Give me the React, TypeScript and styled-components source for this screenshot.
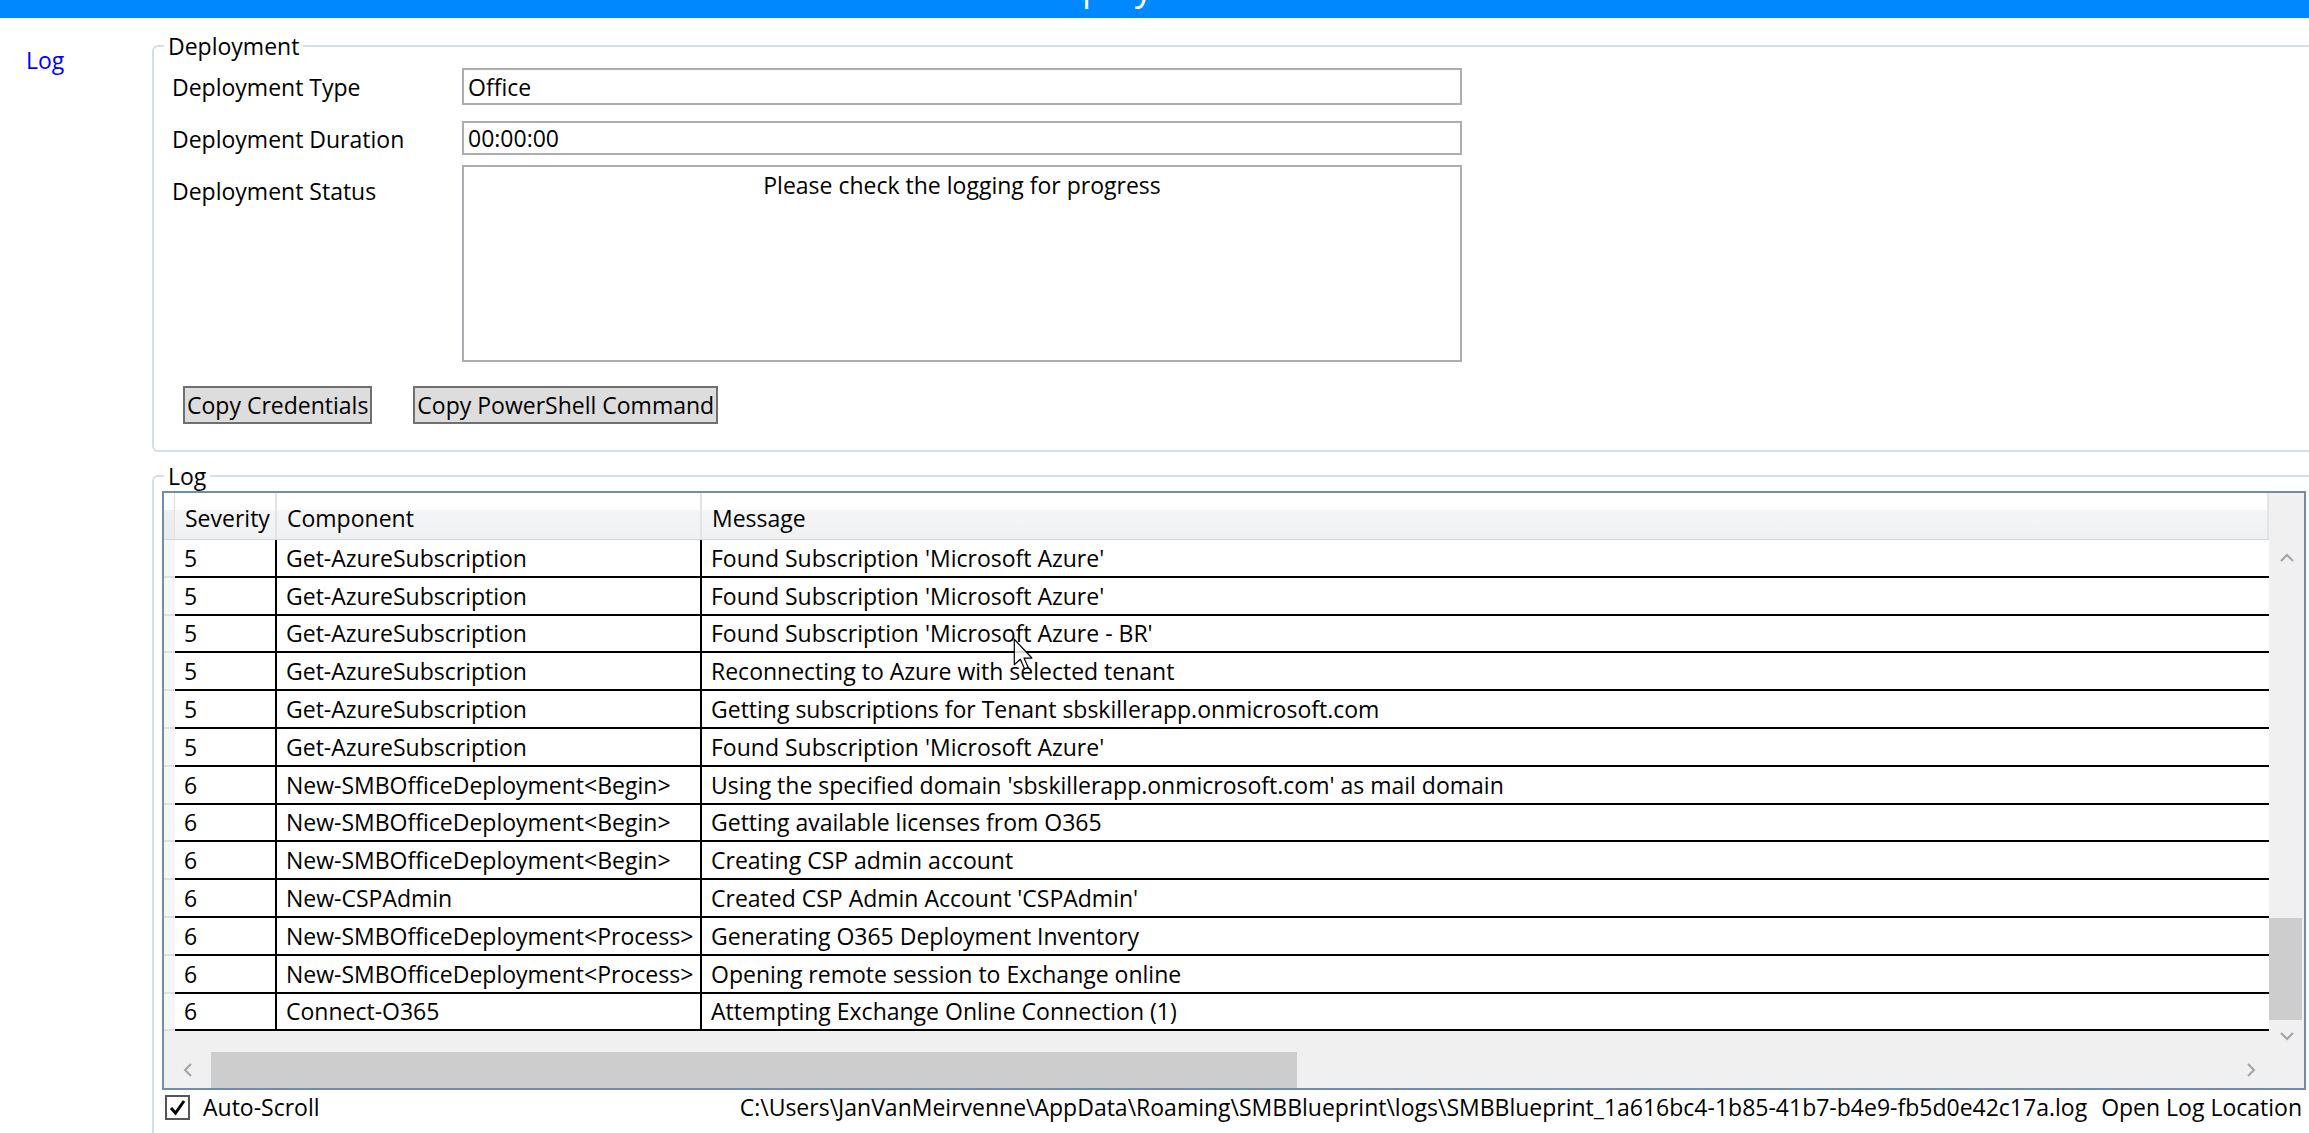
import React from "react";
import styled, { createGlobalStyle } from "styled-components";

const GlobalStyle = createGlobalStyle`
  html, body { margin: 0; padding: 0; background: #fff; overflow: hidden; }
  body { font-family: "Open Sans", "Noto Sans", sans-serif; font-size: 23px; color: #000; }
  * { box-sizing: border-box; }
`;

const Window = styled.div`
  position: relative;
  width: 2309px;
  height: 1133px;
  overflow: hidden;
  display: flex;
  flex-direction: column;
`;

const TitleBar = styled.header`
  flex: 0 0 18px;
  height: 18px;
  background: #0088ff;
  overflow: hidden;
  display: flex;
  justify-content: center;
  align-items: flex-start;
`;

const TitleText = styled.span`
  color: #fff;
  font-size: 36px;
  line-height: 36px;
  margin-top: -31px;
  padding-right: 32px;
  white-space: nowrap;
`;

const Body = styled.div`
  display: flex;
  flex: 1;
  min-height: 0;
`;

const Nav = styled.nav`
  flex: 0 0 152px;
  width: 152px;
  padding: 26px 0 0 26px;
`;

const NavLink = styled.a`
  color: #0000ff;
  font-size: 23px;
  line-height: 30px;
  text-decoration: none;
`;

const Main = styled.main`
  flex: 0 0 2164px;
  width: 2164px;
  display: flex;
  flex-direction: column;
`;

const Group = styled.fieldset<{ $top: number }>`
  margin: ${(p) => p.$top}px 0 0 0;
  padding: 0;
  min-width: 0;
  border: 2px solid #d5dfe6;
  border-radius: 6px;
`;

const Legend = styled.legend`
  margin-left: 10px;
  padding: 0 4px;
  line-height: 30px;
`;

const DeployBody = styled.div`
  padding: 7px 0 26px 18px;
  display: flex;
  flex-direction: column;
`;

const FieldRow = styled.div<{ $mt: number }>`
  display: flex;
  align-items: flex-start;
  margin-top: ${(p) => p.$mt}px;
`;

const Label = styled.label<{ $offset: number }>`
  flex: 0 0 290px;
  width: 290px;
  line-height: 30px;
  padding-top: ${(p) => p.$offset}px;
`;

const TextBox = styled.div<{ $h: number }>`
  width: 1000px;
  height: ${(p) => p.$h}px;
  border: 2px solid #abadb3;
  padding: 0 4px;
  display: flex;
  align-items: center;
  line-height: 30px;
`;

const StatusBox = styled.div`
  width: 1000px;
  height: 197px;
  border: 2px solid #abadb3;
  padding: 3px 4px 0;
  text-align: center;
  line-height: 30px;
`;

const ButtonRow = styled.div`
  display: flex;
  gap: 41px;
  margin: 24px 0 0 11px;
`;

const Button = styled.button`
  height: 38px;
  padding: 0 2px;
  border: 2px solid #707070;
  background: #dddddd;
  font: inherit;
  line-height: 30px;
  color: #000;
`;

const LogBody = styled.div`
  padding: 0 8px 60px 8px;
  display: flex;
  flex-direction: column;
`;

const GridFrame = styled.div`
  border: 2px solid #6e8eae;
  background: #f0f0f0;
  display: grid;
  grid-template-columns: 1fr 35px;
  grid-template-rows: 47px 512px 36px;
`;

const Header = styled.div`
  display: flex;
  background: linear-gradient(#ffffff 0, #ffffff 38%, #f4f5f6 38%, #f0f1f3 100%);
  border-bottom: 1px solid #d5d5d5;
`;

const HeaderGutter = styled.div`
  flex: 0 0 11px;
  border-right: 1px solid #e2e2e2;
  background: linear-gradient(#ffffff 0, #ffffff 38%, #eeeeee 38%, #eaeaea 100%);
`;

const HeaderCell = styled.div<{ $w?: number }>`
  flex: ${(p) => (p.$w ? `0 0 ${p.$w}px` : "1")};
  display: flex;
  align-items: flex-end;
  padding: 0 0 6px 10px;
  border-right: 2px solid #e4e4e4;
  line-height: 30px;
  white-space: nowrap;
`;

const RowsArea = styled.div`
  display: flex;
  flex-direction: column;
  overflow: hidden;
  background: #f0f0f0;
`;

const Row = styled.div`
  display: flex;
  flex: 0 0 37.8px;
  height: 37.8px;
`;

const RowGutter = styled.div`
  flex: 0 0 11px;
  background: #f6f6f6;
  border-bottom: 2px solid #e0e0e0;
`;

const Cell = styled.div<{ $w?: number }>`
  flex: ${(p) => (p.$w ? `0 0 ${p.$w}px` : "1")};
  display: flex;
  align-items: center;
  padding-left: 9px;
  background: #fff;
  border-bottom: 2px solid #000;
  border-right: ${(p) => (p.$w ? "2px solid #000" : "none")};
  white-space: nowrap;
  overflow: hidden;
  line-height: 30px;
`;

const VScroll = styled.div`
  display: flex;
  flex-direction: column;
  background: #f0f0f0;
`;

const ArrowButton = styled.div<{ $size: number }>`
  flex: 0 0 ${(p) => p.$size}px;
  display: flex;
  align-items: center;
  justify-content: center;
`;

const VTrack = styled.div`
  flex: 1;
  display: flex;
  flex-direction: column;
  justify-content: flex-end;
`;

const VThumb = styled.div`
  height: 102px;
  margin: 0 2px 0 0;
  background: #cdcdcd;
`;

const HScroll = styled.div`
  display: flex;
  background: #f0f0f0;
`;

const HTrack = styled.div`
  flex: 1;
  display: flex;
`;

const HThumb = styled.div`
  width: 1086px;
  background: #cdcdcd;
`;

const Corner = styled.div`
  background: #f0f0f0;
`;

const Footer = styled.div`
  display: flex;
  align-items: center;
  height: 28px;
  margin-top: 3px;
  padding: 0 4px 0 3px;
  line-height: 28px;
  white-space: nowrap;
`;

const CheckBox = styled.span`
  width: 25px;
  height: 25px;
  border: 2px solid #555;
  background: #fff;
  display: flex;
  align-items: center;
  justify-content: center;
`;

const CheckLabel = styled.span`
  margin-left: 13px;
`;

const Spacer = styled.span`
  flex: 1;
`;

const PathText = styled.span`
  margin-right: 14px;
`;

const Cursor = styled.svg`
  position: absolute;
  left: 1013px;
  top: 638px;
  pointer-events: none;
`;

const Chevron = ({ dir }: { dir: "up" | "down" | "left" | "right" }) => {
  const paths: Record<string, string> = {
    up: "M1 8 L7 2 L13 8",
    down: "M1 2 L7 8 L13 2",
    left: "M8 1 L2 7 L8 13",
    right: "M2 1 L8 7 L2 13",
  };
  const vertical = dir === "up" || dir === "down";
  return (
    <svg width={vertical ? 14 : 10} height={vertical ? 10 : 14} viewBox={vertical ? "0 0 14 10" : "0 0 10 14"}>
      <path d={paths[dir]} fill="none" stroke="#a3a3a3" strokeWidth="2" />
    </svg>
  );
};

const rows: [string, string, string][] = [
  ["5", "Get-AzureSubscription", "Found Subscription 'Microsoft Azure'"],
  ["5", "Get-AzureSubscription", "Found Subscription 'Microsoft Azure'"],
  ["5", "Get-AzureSubscription", "Found Subscription 'Microsoft Azure - BR'"],
  ["5", "Get-AzureSubscription", "Reconnecting to Azure with selected tenant"],
  ["5", "Get-AzureSubscription", "Getting subscriptions for Tenant sbskillerapp.onmicrosoft.com"],
  ["5", "Get-AzureSubscription", "Found Subscription 'Microsoft Azure'"],
  ["6", "New-SMBOfficeDeployment<Begin>", "Using the specified domain 'sbskillerapp.onmicrosoft.com' as mail domain"],
  ["6", "New-SMBOfficeDeployment<Begin>", "Getting available licenses from O365"],
  ["6", "New-SMBOfficeDeployment<Begin>", "Creating CSP admin account"],
  ["6", "New-CSPAdmin", "Created CSP Admin Account 'CSPAdmin'"],
  ["6", "New-SMBOfficeDeployment<Process>", "Generating O365 Deployment Inventory"],
  ["6", "New-SMBOfficeDeployment<Process>", "Opening remote session to Exchange online"],
  ["6", "Connect-O365", "Attempting Exchange Online Connection (1)"],
];

const logPath = String.raw`C:\Users\JanVanMeirvenne\AppData\Roaming\SMBBlueprint\logs\SMBBlueprint_1a616bc4-1b85-41b7-b4e9-fb5d0e42c17a.log`;

export default function App() {
  return (
    <>
      <GlobalStyle />
      <Window>
        <TitleBar>
          <TitleText>Deployment</TitleText>
        </TitleBar>
        <Body>
          <Nav>
            <NavLink href="#">Log</NavLink>
          </Nav>
          <Main>
            <Group $top={13}>
              <Legend>Deployment</Legend>
              <DeployBody>
                <FieldRow $mt={0}>
                  <Label $offset={4}>Deployment Type</Label>
                  <TextBox $h={37}>Office</TextBox>
                </FieldRow>
                <FieldRow $mt={16}>
                  <Label $offset={3}>Deployment Duration</Label>
                  <TextBox $h={34}>00:00:00</TextBox>
                </FieldRow>
                <FieldRow $mt={10}>
                  <Label $offset={11}>Deployment Status</Label>
                  <StatusBox>Please check the logging for progress</StatusBox>
                </FieldRow>
                <ButtonRow>
                  <Button>Copy Credentials</Button>
                  <Button>Copy PowerShell Command</Button>
                </ButtonRow>
              </DeployBody>
            </Group>
            <Group $top={9}>
              <Legend>Log</Legend>
              <LogBody>
                <GridFrame>
                  <Header>
                    <HeaderGutter />
                    <HeaderCell $w={102}>Severity</HeaderCell>
                    <HeaderCell $w={425}>Component</HeaderCell>
                    <HeaderCell>Message</HeaderCell>
                  </Header>
                  <Corner />
                  <RowsArea>
                    {rows.map(([sev, comp, msg], i) => (
                      <Row key={i}>
                        <RowGutter />
                        <Cell $w={102}>{sev}</Cell>
                        <Cell $w={425}>{comp}</Cell>
                        <Cell>{msg}</Cell>
                      </Row>
                    ))}
                  </RowsArea>
                  <VScroll>
                    <ArrowButton $size={36}>
                      <Chevron dir="up" />
                    </ArrowButton>
                    <VTrack>
                      <VThumb />
                    </VTrack>
                    <ArrowButton $size={32}>
                      <Chevron dir="down" />
                    </ArrowButton>
                  </VScroll>
                  <HScroll>
                    <ArrowButton $size={47}>
                      <Chevron dir="left" />
                    </ArrowButton>
                    <HTrack>
                      <HThumb />
                    </HTrack>
                    <ArrowButton $size={37}>
                      <Chevron dir="right" />
                    </ArrowButton>
                  </HScroll>
                  <Corner />
                </GridFrame>
                <Footer>
                  <CheckBox>
                    <svg width="17" height="17" viewBox="0 0 17 17">
                      <path d="M2 9 L6.5 14 L15 2" fill="none" stroke="#000" strokeWidth="3" />
                    </svg>
                  </CheckBox>
                  <CheckLabel>Auto-Scroll</CheckLabel>
                  <Spacer />
                  <PathText>{logPath}</PathText>
                  <span>Open Log Location</span>
                </Footer>
              </LogBody>
            </Group>
          </Main>
        </Body>
        <Cursor width="22" height="34" viewBox="0 0 18 28">
          <path
            d="M1 1 L1 22 L6 17.5 L9.5 25.5 L12.5 24.2 L9 16.5 L15.5 16.5 Z"
            fill="rgba(255,255,255,0.85)"
            stroke="#000"
            strokeWidth="1"
            strokeLinejoin="round"
          />
        </Cursor>
      </Window>
    </>
  );
}
